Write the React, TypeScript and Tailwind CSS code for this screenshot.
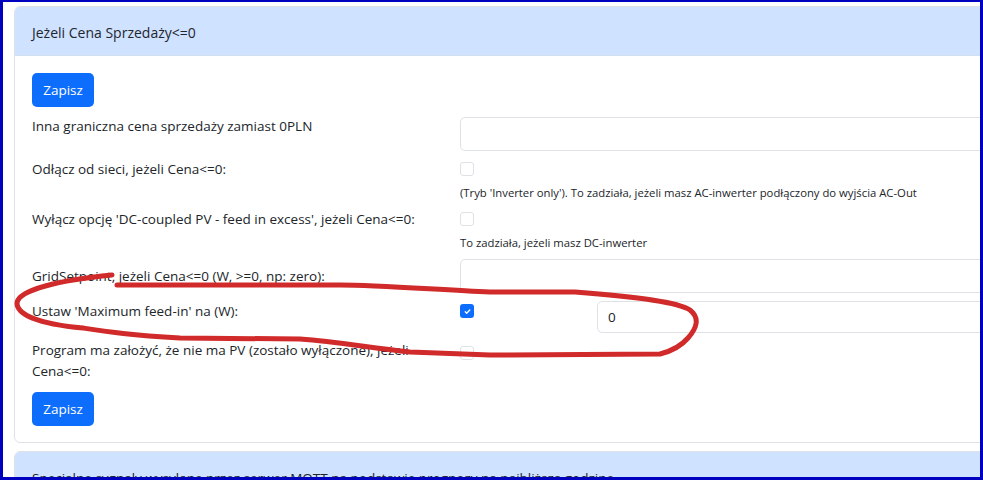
const font = "font-['Segoe_UI','Open_Sans',sans-serif]";

const Checkbox = ({ checked = false }: { checked?: boolean }) =>
  checked ? (
    <span className="mt-[2px] flex h-[14px] w-[14px] items-center justify-center rounded-[3px] bg-[#0d6efd]">
      <svg width="9" height="9" viewBox="0 0 20 20" fill="none">
        <path d="M5 10.5l3.2 3.2L15 6.5" stroke="#fff" strokeWidth="3" strokeLinecap="round" strokeLinejoin="round" />
      </svg>
    </span>
  ) : (
    <span className="mt-[2px] block h-[14px] w-[14px] rounded-[3px] border border-[#dee2e6] bg-white" />
  );

const Button = () => (
  <button className="h-[34px] w-[62px] rounded-[5px] bg-[#0d6efd] text-[13.5px] text-white">Zapisz</button>
);

const Row = ({ label, children, className = "" }: { label: React.ReactNode; children: React.ReactNode; className?: string }) => (
  <div className={`flex ${className}`}>
    <div className="w-[428px] shrink-0 pr-3 leading-[21px]">{label}</div>
    <div className="flex-1">{children}</div>
  </div>
);

const Input = ({ value = "", className = "" }: { value?: string; className?: string }) => (
  <div className={`flex items-center rounded-[5px] border border-[#dee2e6] bg-white px-[10px] text-[13.5px] text-[#212529] ${className}`}>
    {value}
  </div>
);

export default function App() {
  return (
    <div className={`relative h-[480px] w-[983px] overflow-hidden border-x-[3px] border-t-2 border-b-[3px] border-[#0000bf] bg-white ${font} text-[13.5px] text-[#212529]`}>
      <div className="w-[1010px] pl-[11px] pt-[4px]">
        <div className="rounded-[6px] border border-[#dee2e6]">
          <div className="flex h-[49px] items-center rounded-t-[5px] border-b border-[#d3dff0] bg-[#cfe2ff] px-[17px] pt-[2px] text-[14px] text-[#1f2630]">
            Jeżeli Cena Sprzedaży&lt;=0
          </div>
          <div className="px-[17px] pb-[16px] pt-[17px]">
            <Button />
            <div className="mt-[10px] flex flex-col">
              <Row label={<span className="-mt-[1px] block">Inna graniczna cena sprzedaży zamiast 0PLN</span>}>
                <Input className="h-[34px]" />
              </Row>
              <Row className="mt-[8px]" label="Odłącz od sieci, jeżeli Cena<=0:">
                <div className="flex h-[21px] items-start pt-[1px]"><Checkbox /></div>
                <div className="mt-[4px] text-[11.3px] leading-[18px]">(Tryb 'Inverter only'). To zadziała, jeżeli masz AC-inwerter podłączony do wyjścia AC-Out</div>
              </Row>
              <Row className="mt-[7px]" label="Wyłącz opcję 'DC-coupled PV - feed in excess', jeżeli Cena<=0:">
                <div className="flex h-[21px] items-start pt-[1px]"><Checkbox /></div>
                <div className="mt-[4px] text-[11.3px] leading-[18px]">To zadziała, jeżeli masz DC-inwerter</div>
              </Row>
              <Row className="mt-[7px] items-center" label="GridSetpoint, jeżeli Cena<=0 (W, >=0, np: zero):">
                <Input className="h-[34px]" />
              </Row>
              <Row className="mt-[8px]" label="Ustaw 'Maximum feed-in' na (W):">
                <div className="flex">
                  <div className="w-[137px] pt-[1px]"><Checkbox checked /></div>
                  <Input value="0" className="h-[32px] flex-1" />
                </div>
              </Row>
              <Row
                className="mt-[7px]"
                label={<>Program ma założyć, że nie ma PV (zostało wyłączone), jeżeli<br />Cena&lt;=0:</>}
              >
                <div className="pt-[4px]"><Checkbox /></div>
              </Row>
            </div>
            <div className="mt-[10px]"><Button /></div>
          </div>
        </div>
        <div className="mt-[8px] rounded-[6px] border border-[#dee2e6]">
          <div className="h-[49px] rounded-t-[5px] bg-[#cfe2ff] px-[17px] pt-[16px] leading-[21px]">
            Specjalne sygnały wysyłane przez serwer MQTT na podstawie prognozy na najbliższą godzinę
          </div>
        </div>
      </div>
      <svg className="pointer-events-none absolute left-[-3px] top-[-2px]" width="983" height="480" viewBox="0 0 983 480" fill="none">
        <path
          d="M112,275 C60,280 18,290 17,303 C17,315 40,324 83,328 C110,332 130,335 180,338 L300,339 C340,342 370,348 410,352 L490,355 L660,354 C672,351 682,345 688,338 C697,328 700,318 690,310 C678,302 640,297 575,292 L490,292 C440,290 380,285 340,285 L117,285"
          stroke="#d12a2a"
          strokeWidth="5"
          strokeLinecap="round"
          strokeLinejoin="round"
        />
      </svg>
    </div>
  );
}
